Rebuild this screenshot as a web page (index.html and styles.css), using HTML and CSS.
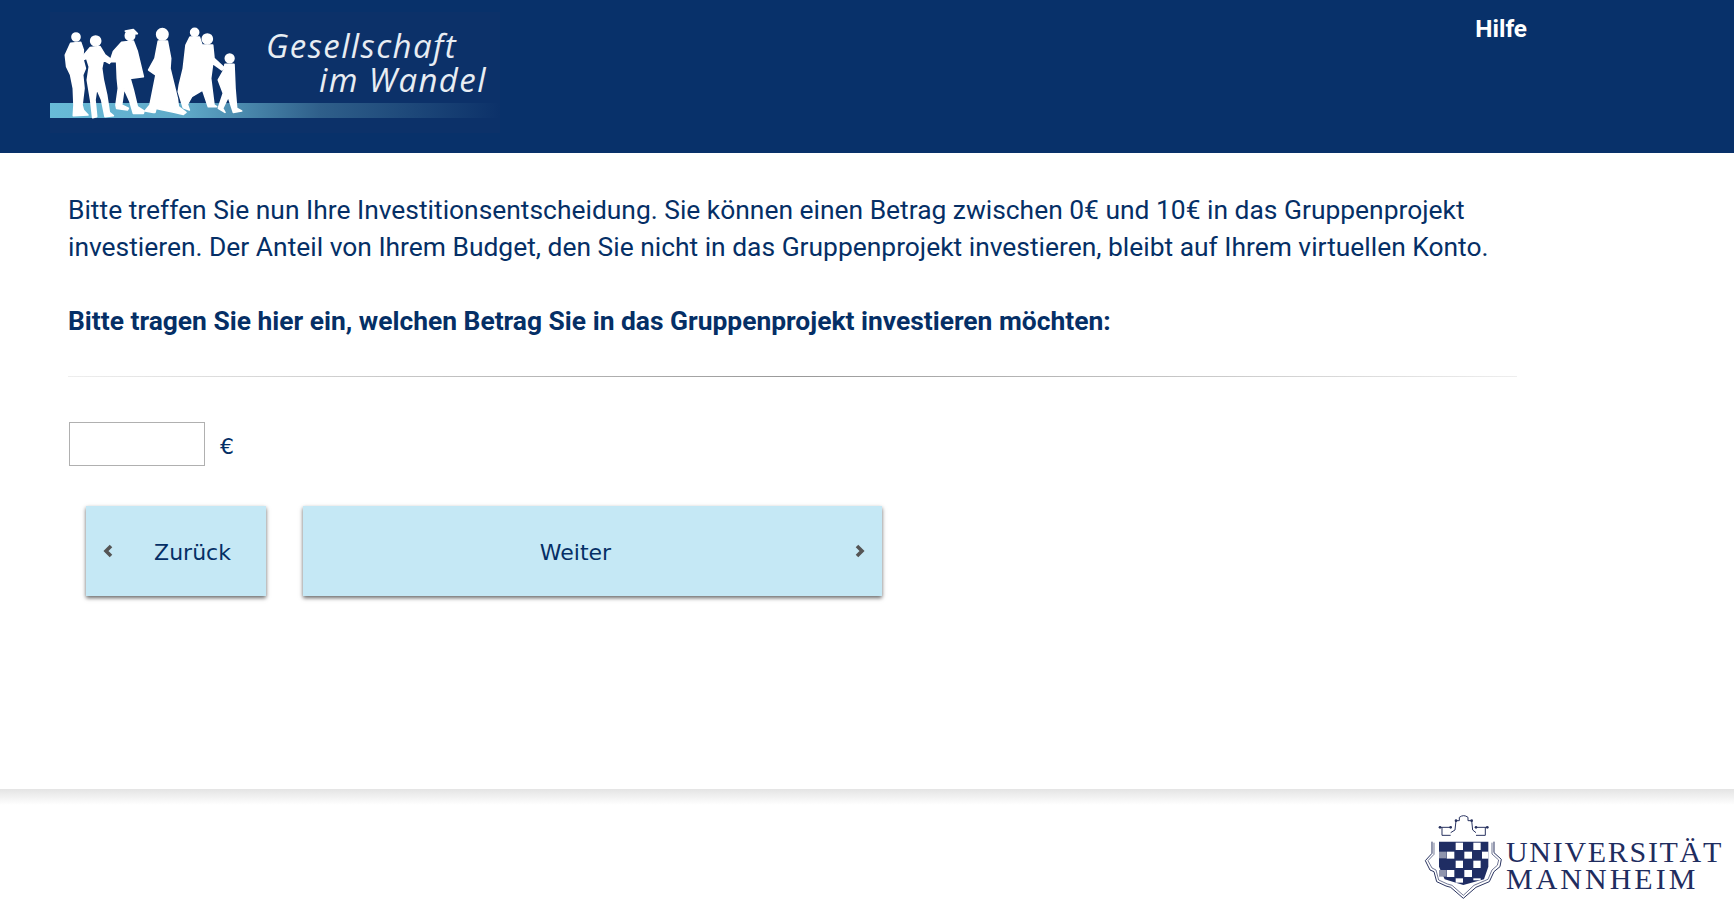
FILE: index.html
```html
<!DOCTYPE html>
<html lang="de">
<head>
    <meta charset="UTF-8">
    <title>Gesellschaft im Wandel</title>
    <link rel="stylesheet" href="styles.css">
</head>
<body>
<header class="site-header">
    <svg class="project-logo" viewBox="50 12 450 121" width="450" height="121" role="img" aria-label="Gesellschaft im Wandel">
        <defs>
            <linearGradient id="bandFade" x1="0" x2="1" y1="0" y2="0">
                <stop offset="0" stop-color="#68bbd8"/>
                <stop offset="0.3" stop-color="#5fa9c8"/>
                <stop offset="0.6" stop-color="#2f5f8a"/>
                <stop offset="1" stop-color="#0c3169"/>
            </linearGradient>
            <filter id="soft"><feGaussianBlur stdDeviation="0.5"/></filter>
        </defs>
        <rect x="50" y="12" width="450" height="121" fill="#0c3169"/>
        <rect x="50" y="103" width="450" height="15" fill="url(#bandFade)"/>
        <g transform="translate(50 25) scale(0.3333)" fill="#fff" stroke="#fff" stroke-width="5" stroke-linejoin="round" filter="url(#soft)">
            <circle cx="78" cy="36" r="12"/>
            <path d="M62 55 92 52 100 75 98 100 106 130 98 150 102 190 96 240 100 255 114 270 70 272 72 240 70 190 62 150 50 125 46 90Z"/>
            <circle cx="137" cy="48" r="15"/>
            <path d="M120 68 150 65 165 90 185 105 178 115 160 105 155 130 160 165 170 210 178 262 190 272 165 275 155 225 140 190 135 225 140 275 128 278 122 225 112 165 118 125 110 100 98 105 95 98Z"/>
            <circle cx="240" cy="32" r="14"/>
            <path d="M226 18 250 14 262 26 240 28Z"/>
            <path d="M215 52 250 48 262 80 280 155 240 160 250 195 262 245 282 258 280 265 250 265 240 230 222 190 215 240 235 250 232 255 200 250 198 240 205 190 202 160 200 110 180 110 190 80Z"/>
            <circle cx="337" cy="28" r="17"/>
            <path d="M325 48 352 48 362 100 360 130 382 220 385 245 408 262 400 268 375 262 318 250 315 262 310 262 285 258 300 240 305 215 318 150 296 135 315 100Z"/>
            <circle cx="434" cy="22" r="12"/>
            <circle cx="472" cy="42" r="15"/>
            <path d="M420 36 448 36 456 60 488 60 492 100 522 128 516 135 488 115 482 160 492 240 500 245 475 245 458 195 425 215 412 238 418 255 400 248 385 200 388 180 400 130 408 60Z"/>
            <circle cx="539" cy="100" r="13"/>
            <path d="M525 118 552 118 555 190 560 250 575 258 550 262 535 215 518 250 525 262 505 250 520 205 505 165 522 135Z"/>
        </g>
        <text class="logo-text"><tspan x="266" y="58">Gesellschaft</tspan><tspan x="319" y="92">im Wandel</tspan></text>
    </svg>
    <a class="help-link" href="#">Hilfe</a>
</header>

<main class="content">
    <p class="question">
        Bitte treffen Sie nun Ihre Investitionsentscheidung. Sie können einen Betrag zwischen 0€ und 10€ in das Gruppenprojekt investieren. Der Anteil von Ihrem Budget, den Sie nicht in das Gruppenprojekt investieren, bleibt auf Ihrem virtuellen Konto.
    </p>
    <p class="question question-strong">Bitte tragen Sie hier ein, welchen Betrag Sie in das Gruppenprojekt investieren möchten:</p>
    <hr class="divider">
    <div class="amount-row">
        <input class="amount-input" type="text" aria-label="Betrag">
        <span class="amount-unit">€</span>
    </div>
    <div class="nav-buttons">
        <button class="nav-button back" type="button">
            <svg class="chevron" viewBox="0 0 12 16" width="12" height="16"><path d="M9 3 4 8l5 5" fill="none" stroke="#555" stroke-width="3.6"/></svg>
            <span class="nav-label">Zurück</span>
        </button>
        <button class="nav-button next" type="button">
            <span class="nav-label">Weiter</span>
            <svg class="chevron" viewBox="0 0 12 16" width="12" height="16"><path d="M3 3l5 5-5 5" fill="none" stroke="#555" stroke-width="3.6"/></svg>
        </button>
    </div>
</main>

<footer class="site-footer">
    <svg class="uni-logo" viewBox="1420 812 314 92" width="314" height="92" role="img" aria-label="Universität Mannheim">
        <g transform="translate(1420 810) scale(0.3333)">
            <g fill="none" stroke="#28325f" stroke-width="3">
                <path d="M118 32V22Q131 12 144 22V32"/>
                <path d="M60 52H92M66 52V76H92M108 32H118M144 32H155M108 32 105 60 92 68M155 32 158 60 168 68M168 52H202M168 76H196V52"/>
                <path d="M36 95V130L16 152 30 180 42 185 50 215 78 228 92 232 130 265 168 232 208 215 222 185 240 170 244 148 222 128V95"/>
                <path d="M42 98V133L24 152 36 174 48 180 56 210 82 222 96 226 130 256 162 226 204 208 216 180 232 166 236 150 216 132V98" stroke-width="2"/>
            </g>
            <g fill="#28325f">
                <circle cx="60" cy="52" r="4"/><circle cx="92" cy="52" r="4"/>
                <circle cx="168" cy="52" r="4"/><circle cx="202" cy="52" r="4"/>
                <circle cx="108" cy="32" r="4"/><circle cx="155" cy="32" r="4"/>
            </g>
            <path d="M57 95H205V170L192 208 130 225 74 208 57 170Z" fill="#1f2d63"/>
            <g fill="#8f95ad">
                <rect x="57" y="125" width="21" height="20"/>
                <rect x="57" y="180" width="21" height="20"/>
            </g>
            <g fill="#fff">
                <rect x="107" y="98" width="22" height="22"/><rect x="160" y="98" width="22" height="22"/>
                <rect x="80" y="125" width="23" height="21"/><rect x="133" y="125" width="23" height="21"/><rect x="186" y="125" width="19" height="21"/>
                <rect x="107" y="152" width="22" height="22"/><rect x="160" y="152" width="22" height="22"/>
                <rect x="80" y="180" width="23" height="21"/><rect x="133" y="180" width="23" height="21"/>
                <rect x="107" y="205" width="22" height="13"/><rect x="160" y="205" width="22" height="6"/>
            </g>
        </g>
        <text class="uni-name"><tspan class="uni-first" x="1506" y="862">UNIVERSITÄT</tspan><tspan class="uni-second" x="1506" y="889">MANNHEIM</tspan></text>
    </svg>
</footer>
</body>
</html>
```

FILE: styles.css
```css
html, body {
    height: 100%;
}
body {
    display: flex;
    flex-direction: column;
    margin: 0;
    font-family: 'Roboto', sans-serif;
    color: #052f66;
    background-color: white;
}
.site-header {
    display: flex;
    justify-content: space-between;
    align-items: flex-start;
    height: 153px;
    padding: 12px 207px 0 50px;
    box-sizing: border-box;
    background-color: #08316a;
}
.project-logo {
    display: block;
}
.logo-text {
    font-family: 'Open Sans', sans-serif;
    font-style: italic;
    font-size: 33px;
    letter-spacing: 1.4px;
    fill: #e8edf3;
}
.help-link {
    margin-top: 1px;
    font-size: 24.4px;
    line-height: 32px;
    font-weight: 700;
    color: white;
    text-decoration: none;
}
.content {
    flex: 1;
    width: 1449px;
    padding: 39px 0 0 68px;
}
.question {
    margin: 0 0 37px;
    font-size: 26.4px;
    line-height: 37px;
}
.question-strong {
    margin-bottom: 0;
    font-weight: 700;
}
.divider {
    height: 1px;
    margin: 36px 0 45px;
    border: none;
    background: linear-gradient(to right, #eee, #999, #eee);
}
.amount-row {
    display: flex;
    align-items: center;
    gap: 15px;
    margin-left: 1px;
}
.amount-input {
    width: 136px;
    height: 44px;
    padding: 0;
    border: 1px solid #b0b0b0;
    box-sizing: border-box;
}
.amount-unit {
    margin-top: 4px;
    font-family: 'DejaVu Sans', sans-serif;
    font-size: 22px;
}
.nav-buttons {
    display: flex;
    gap: 37px;
    margin: 40px 0 0 18px;
}
.nav-button {
    display: flex;
    align-items: center;
    height: 90px;
    border: none;
    background-color: #c5e8f5;
    color: #052f66;
    font-family: 'DejaVu Sans', sans-serif;
    font-size: 22px;
    box-shadow: 0 2px 4px rgba(0, 0, 0, 0.6);
    cursor: pointer;
}
.nav-button.back {
    width: 180px;
    padding: 0 0 0 16px;
    gap: 5px;
}
.nav-button.next {
    width: 579px;
    padding: 0 16px 0 0;
    gap: 6px;
}
.nav-label {
    flex: 1;
    padding-top: 2px;
    text-align: center;
}
.chevron {
    flex: none;
}
.site-footer {
    display: flex;
    justify-content: flex-end;
    align-items: flex-end;
    height: 115px;
    background: linear-gradient(to bottom, #e4e4e4, #fff 16px);
}
.uni-logo {
    display: block;
}
.uni-name {
    font-family: 'Liberation Serif', serif;
    font-size: 30px;
    fill: #1f2d5f;
}
.uni-first {
    letter-spacing: 1.7px;
}
.uni-second {
    letter-spacing: 3px;
}
```
